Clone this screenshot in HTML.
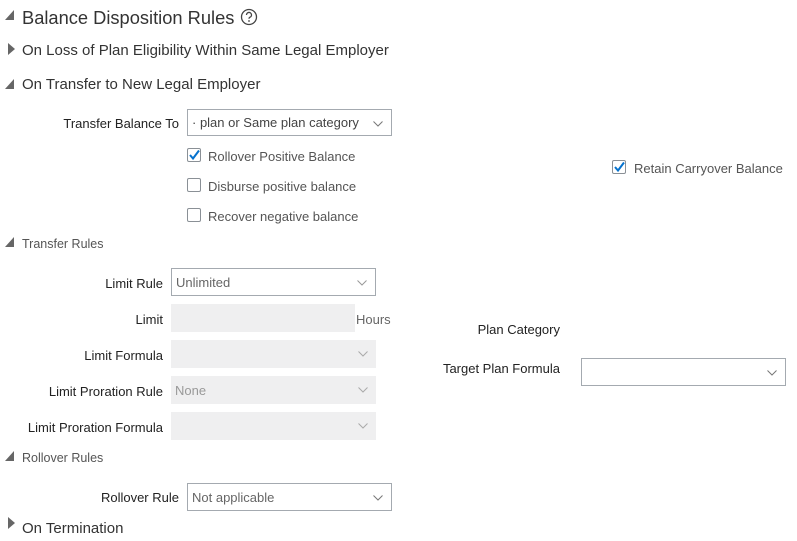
<!DOCTYPE html>
<html><head><style>
body{margin:0;width:797px;height:541px;background:#fff;font-family:"Liberation Sans",sans-serif;color:#333;position:relative;overflow:hidden}
.a{position:absolute;white-space:nowrap}
.lbl{position:absolute;font-size:13px;color:#222;line-height:16px;text-align:right;white-space:nowrap}
.sel{position:absolute;box-sizing:border-box;border:1px solid #a4aab0;background:#fff;font-size:13px;color:#666;line-height:27px;padding-left:4px;overflow:hidden;white-space:nowrap}
.dis{border:none;background:#efeff0;color:#999;line-height:29px}
.chev{position:absolute;right:8px;top:9px;width:10px;height:6px}
.cb{position:absolute;width:14px;height:14px;box-sizing:border-box;border:1px solid #8a9096;border-radius:2px;background:#fff}
.ct{position:absolute;font-size:13px;color:#555;line-height:16px;white-space:nowrap}
.tri{position:absolute}
</style></head><body>
<svg class="tri" style="left:5px;top:10px" width="10" height="11"><polygon points="9,0 9,10 0,10" fill="#666"/></svg>
<div class="a" style="left:22px;top:5px;font-size:18.3px;color:#333;line-height:26px">Balance Disposition Rules</div>
<svg class="a" style="left:240px;top:8px" width="18" height="18"><circle cx="9" cy="9" r="7.5" fill="none" stroke="#444" stroke-width="1.3"/><path d="M6.5 7 A2.5 2.5 0 1 1 9.8 9.3 Q9 9.7 9 10.8" fill="none" stroke="#444" stroke-width="1.3"/><circle cx="9" cy="13" r="0.9" fill="#444"/></svg>

<svg class="tri" style="left:8px;top:43px" width="8" height="12"><polygon points="0,0 7,6 0,12" fill="#666"/></svg>
<div class="a" style="left:22px;top:41px;font-size:15px;line-height:19px">On Loss of Plan Eligibility Within Same Legal Employer</div>
<svg class="tri" style="left:5px;top:79px" width="10" height="11"><polygon points="9,0 9,10 0,10" fill="#666"/></svg>
<div class="a" style="left:22px;top:75px;font-size:15px;line-height:19px">On Transfer to New Legal Employer</div>

<div class="lbl" style="right:618px;top:116px">Transfer Balance To</div>
<div class="sel" style="left:187px;top:109px;width:205px;height:27px;color:#444;line-height:26px">· plan or Same plan category<svg class="chev" viewBox="0 0 10 6" style="top:11px"><polyline points="0.5,0.5 5,5 9.5,0.5" fill="none" stroke="#777"/></svg></div>

<div class="cb" style="left:187px;top:148px"><svg width="12" height="12" style="position:absolute;left:0;top:0"><polyline points="2,6 5,9.5 11,1.5" fill="none" stroke="#0572ce" stroke-width="2"/></svg></div>
<div class="ct" style="left:208px;top:149px">Rollover Positive Balance</div>
<div class="cb" style="left:187px;top:178px"></div>
<div class="ct" style="left:208px;top:179px">Disburse positive balance</div>
<div class="cb" style="left:187px;top:208px"></div>
<div class="ct" style="left:208px;top:209px">Recover negative balance</div>

<div class="cb" style="left:612px;top:160px"><svg width="12" height="12" style="position:absolute;left:0;top:0"><polyline points="2,6 5,9.5 11,1.5" fill="none" stroke="#0572ce" stroke-width="2"/></svg></div>
<div class="ct" style="left:634px;top:161px">Retain Carryover Balance</div>

<svg class="tri" style="left:5px;top:237px" width="10" height="11"><polygon points="9,0 9,10 0,10" fill="#666"/></svg>
<div class="a" style="left:22px;top:236px;font-size:12.5px;color:#555;line-height:16px">Transfer Rules</div>

<div class="lbl" style="right:634px;top:276px">Limit Rule</div>
<div class="sel" style="left:171px;top:268px;width:205px;height:28px">Unlimited<svg class="chev" viewBox="0 0 10 6" style="top:11px"><polyline points="0.5,0.5 5,5 9.5,0.5" fill="none" stroke="#999"/></svg></div>
<div class="lbl" style="right:634px;top:312px">Limit</div>
<div class="sel dis" style="left:171px;top:304px;width:184px;height:28px"></div>
<div class="a" style="left:356px;top:312px;font-size:13px;color:#666;line-height:16px">Hours</div>
<div class="lbl" style="right:634px;top:348px">Limit Formula</div>
<div class="sel dis" style="left:171px;top:340px;width:205px;height:28px"><svg class="chev" viewBox="0 0 10 6" style="top:11px"><polyline points="0.5,0.5 5,5 9.5,0.5" fill="none" stroke="#aaa"/></svg></div>
<div class="lbl" style="right:634px;top:384px">Limit Proration Rule</div>
<div class="sel dis" style="left:171px;top:376px;width:205px;height:28px">None<svg class="chev" viewBox="0 0 10 6" style="top:11px"><polyline points="0.5,0.5 5,5 9.5,0.5" fill="none" stroke="#aaa"/></svg></div>
<div class="lbl" style="right:634px;top:420px">Limit Proration Formula</div>
<div class="sel dis" style="left:171px;top:412px;width:205px;height:28px"><svg class="chev" viewBox="0 0 10 6" style="top:11px"><polyline points="0.5,0.5 5,5 9.5,0.5" fill="none" stroke="#aaa"/></svg></div>

<div class="lbl" style="right:237px;top:322px">Plan Category</div>
<div class="lbl" style="right:237px;top:361px">Target Plan Formula</div>
<div class="sel" style="left:581px;top:358px;width:205px;height:28px"><svg class="chev" viewBox="0 0 10 6" style="top:11px"><polyline points="0.5,0.5 5,5 9.5,0.5" fill="none" stroke="#777"/></svg></div>

<svg class="tri" style="left:5px;top:451px" width="10" height="11"><polygon points="9,0 9,10 0,10" fill="#666"/></svg>
<div class="a" style="left:22px;top:450px;font-size:12.5px;color:#555;line-height:16px">Rollover Rules</div>

<div class="lbl" style="right:618px;top:490px">Rollover Rule</div>
<div class="sel" style="left:187px;top:483px;width:205px;height:28px">Not applicable<svg class="chev" viewBox="0 0 10 6" style="top:11px"><polyline points="0.5,0.5 5,5 9.5,0.5" fill="none" stroke="#777"/></svg></div>

<svg class="tri" style="left:8px;top:517px" width="8" height="12"><polygon points="0,0 7,6 0,12" fill="#666"/></svg>
<div class="a" style="left:22px;top:519px;font-size:15px;line-height:19px">On Termination</div>
</body></html>
